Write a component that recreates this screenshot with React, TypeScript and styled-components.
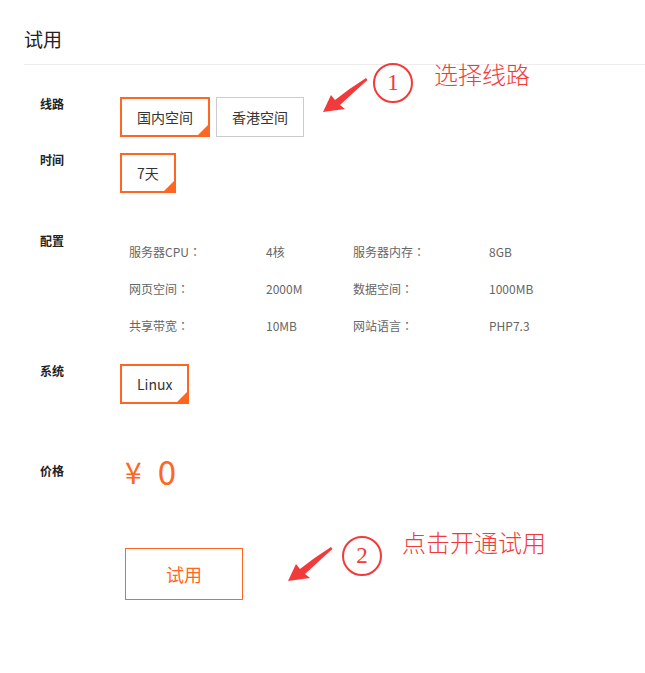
import React from "react";
import styled, { createGlobalStyle } from "styled-components";

const GlobalStyle = createGlobalStyle`
  html, body {
    margin: 0;
    padding: 0;
    background: #fff;
  }
  body {
    font-family: "Noto Sans CJK SC", "Noto Sans", sans-serif;
    color: #333;
  }
`;

const ORANGE = "#ff6622";
const RED = "#f23a3a";

const Page = styled.div`
  position: relative;
  width: 645px;
  height: 673px;
  overflow: hidden;
`;

const Header = styled.div`
  margin-left: 24px;
  height: 65px;
  box-sizing: border-box;
  padding-top: 26px;
  border-bottom: 1px solid #ededed;
`;

const Title = styled.h2`
  margin: 0;
  font-size: 19px;
  font-weight: 400;
  line-height: 26px;
  color: #222;
`;

const Content = styled.div`
  padding-left: 40px;
`;

const Row = styled.div<{ $top: number; $center?: boolean }>`
  display: flex;
  align-items: ${(p) => (p.$center ? "center" : "flex-start")};
  margin-top: ${(p) => p.$top}px;
`;

const Label = styled.div<{ $pad?: number }>`
  width: 80px;
  flex: none;
  font-size: 12px;
  font-weight: 700;
  line-height: 14px;
  padding-top: ${(p) => p.$pad ?? 0}px;
  color: #222;
`;

const Options = styled.div`
  display: flex;
  gap: 6px;
`;

const Option = styled.div<{ $active?: boolean }>`
  position: relative;
  box-sizing: border-box;
  height: 40px;
  display: flex;
  align-items: center;
  padding: 0 15px;
  font-size: 14px;
  color: #333;
  border: ${(p) => (p.$active ? `2px solid ${ORANGE}` : "1px solid #ccc")};
  background: #fff;

  &::after {
    content: "";
    display: ${(p) => (p.$active ? "block" : "none")};
    position: absolute;
    right: 0;
    bottom: 0;
    width: 0;
    height: 0;
    border-style: solid;
    border-width: 0 0 10px 10px;
    border-color: transparent transparent ${ORANGE} transparent;
  }
`;

const SpecGrid = styled.div`
  display: grid;
  grid-template-columns: 137px 87px 136px auto;
  grid-auto-rows: 37px;
  align-items: center;
  margin-left: 9px;
  font-size: 12px;
  color: #666;
`;

const Colon = styled.span`
  font-family: "Noto Sans CJK JP", sans-serif;
`;

const Price = styled.div`
  display: flex;
  align-items: center;
  gap: 16px;
  padding-left: 5px;
  font-size: 33px;
  line-height: 36px;
  color: ${ORANGE};
`;

const Yen = styled.span`
  font-size: 30px;
`;

const TrialButton = styled.button`
  display: block;
  margin: 59px 0 0 85px;
  width: 118px;
  height: 52px;
  border: 1px solid ${ORANGE};
  background: #fff;
  color: ${ORANGE};
  font-family: inherit;
  font-size: 18px;
  cursor: pointer;
`;

/* red annotation marks drawn over the screenshot */
const Circle = styled.div<{ $x: number; $y: number }>`
  position: absolute;
  left: ${(p) => p.$x}px;
  top: ${(p) => p.$y}px;
  width: 40px;
  height: 40px;
  box-sizing: border-box;
  border: 2.5px solid ${RED};
  border-radius: 50%;
  display: flex;
  align-items: center;
  justify-content: center;
  font-family: "Liberation Serif", "DejaVu Serif", serif;
  font-size: 23px;
  color: ${RED};
`;

const Note = styled.div<{ $x: number; $y: number }>`
  position: absolute;
  left: ${(p) => p.$x}px;
  top: ${(p) => p.$y}px;
  font-size: 24px;
  font-weight: 300;
  line-height: 30px;
  color: ${RED};
`;

const ArrowSvg = styled.svg<{ $x: number; $y: number }>`
  position: absolute;
  left: ${(p) => p.$x}px;
  top: ${(p) => p.$y}px;
`;

const Arrow = ({ x, y }: { x: number; y: number }) => (
  <ArrowSvg $x={x} $y={y} width="50" height="40" viewBox="0 0 50 40">
    <path
      d="M3 36 L11 19 L15 24 Q30 12 46 2 L47.5 4 Q34 16 20 29 L25 33 Z"
      fill={RED}
    />
  </ArrowSvg>
);

const specs = [
  ["服务器CPU", "4核", "服务器内存", "8GB"],
  ["网页空间", "2000M", "数据空间", "1000MB"],
  ["共享带宽", "10MB", "网站语言", "PHP7.3"],
];

export default function App() {
  return (
    <Page>
      <GlobalStyle />
      <Header>
        <Title>试用</Title>
      </Header>
      <Content>
        <Row $top={32}>
          <Label>线路</Label>
          <Options>
            <Option $active>国内空间</Option>
            <Option>香港空间</Option>
          </Options>
        </Row>
        <Row $top={16}>
          <Label>时间</Label>
          <Options>
            <Option $active>7天</Option>
          </Options>
        </Row>
        <Row $top={40}>
          <Label $pad={1}>配置</Label>
          <SpecGrid>
            {specs.map(([k1, v1, k2, v2]) => (
              <React.Fragment key={k1}>
                <span>
                  {k1}
                  <Colon>：</Colon>
                </span>
                <span>{v1}</span>
                <span>
                  {k2}
                  <Colon>：</Colon>
                </span>
                <span>{v2}</span>
              </React.Fragment>
            ))}
          </SpecGrid>
        </Row>
        <Row $top={20}>
          <Label>系统</Label>
          <Options>
            <Option $active>Linux</Option>
          </Options>
        </Row>
        <Row $top={49} $center>
          <Label>价格</Label>
          <Price>
            <Yen>¥</Yen>
            <span>0</span>
          </Price>
        </Row>
        <TrialButton>试用</TrialButton>
      </Content>

      <Arrow x={320} y={76} />
      <Circle $x={373} $y={63}>1</Circle>
      <Note $x={434} $y={59}>选择线路</Note>

      <Arrow x={285} y={545} />
      <Circle $x={342} $y={536}>2</Circle>
      <Note $x={402} $y={527}>点击开通试用</Note>
    </Page>
  );
}
